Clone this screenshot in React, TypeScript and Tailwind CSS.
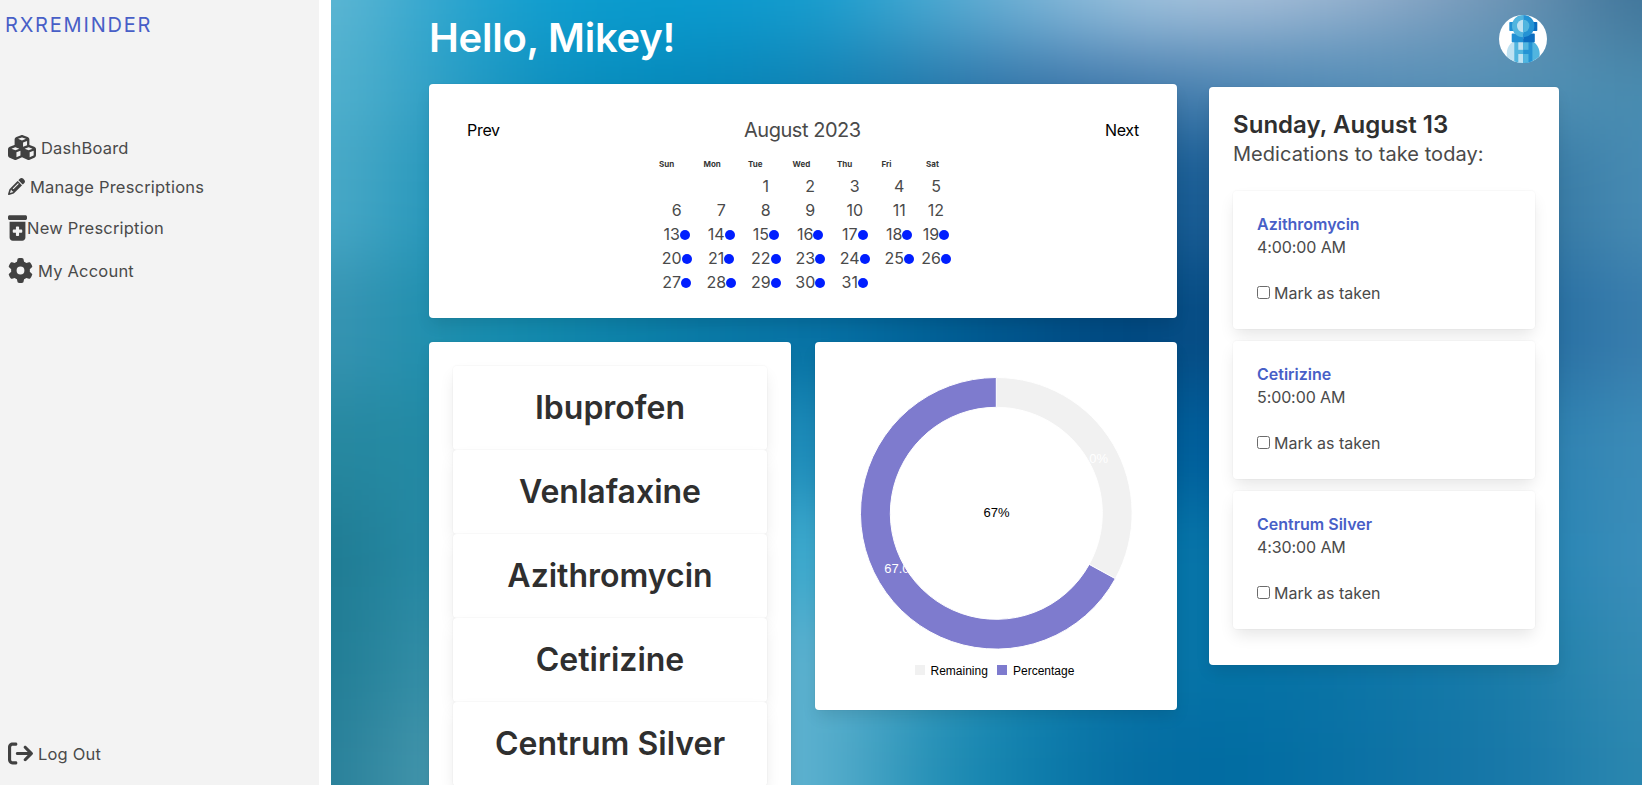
import React from "react";
import {
  FaCubes,
  FaPencil,
  FaPrescriptionBottleMedical,
  FaGear,
  FaArrowRightFromBracket,
} from "react-icons/fa6";

const boxShadow =
  "shadow-[0_0.5em_1em_-0.125em_rgba(10,10,10,0.1),0_0_0_1px_rgba(10,10,10,0.02)]";

/* Colour samples of the wallpaper: one row per height, one colour per 100px column. */
const wallpaper: { y: number; h: number; colors: string }[] = [
  { y: -80, h: 100, colors: "62b8d4 38a8d0 12a0d0 0a9ccf 0a9bd0 1aa0d0 4cacd4 7cb5d7 a0c6e0 b0c6de a2bad4 8aa6c4 6890b0 3c7298" },
  { y: 20, h: 40, colors: "5ab4d0 2ca3ca 1199c9 0895c8 0a92c6 1c93c4 3f96c2 5a9cc8 7ba5ca 7ba2c6 6f9cc2 6593b9 5a90b4 487ea0" },
  { y: 60, h: 70, colors: "54b2ce 34a1c6 1090bf 058bbb 0785b8 1280b2 2577aa 3872a6 4078aa 4a84b2 528cb6 5a92b8 5292b6 488cb0" },
  { y: 130, h: 130, colors: "4caac8 2898bb 1088b5 0a80b0 0a78a8 0a70a0 0a6498 085a90 105890 205f96 2a6a9c 306f9f 32749f 488cb4" },
  { y: 260, h: 130, colors: "3a94b2 1f8fae 128aae 0c80a8 0876a4 0670a4 006096 00528a 00467e 0a5088 145a92 1c6096 226a9e 3a7eae" },
  { y: 390, h: 110, colors: "27889f 2289a4 208cab 1c8cb0 1e8eba 1e8cba 1474a4 08649a 005a92 0060a0 0c6ca2 1a74a8 2a7eae 3c8cb8" },
  { y: 500, h: 110, colors: "1f7a91 268aa6 2a90ae 3096b6 3eaace 3eaace 2490b8 1080b0 0474a8 0874a8 1278aa 1a7cac 2282b2 3c8eba" },
  { y: 610, h: 100, colors: "1f7b93 348fa8 3c98b2 48a4c0 5cb4d2 5cb0ce 3498ba 1484b0 0a76a8 0472a6 0a74a6 1278a8 1c7da8 368cb4" },
  { y: 710, h: 160, colors: "267e98 4496ac 50a0b8 5aaac4 68b8d6 58aecc 2490b6 0e7eac 066ca2 006ca2 0870a4 1274a6 1a79a9 2c88b0" },
];

function Wallpaper() {
  return (
    <svg className="absolute inset-0 h-full w-full" viewBox="0 0 1311 785" preserveAspectRatio="none" aria-hidden="true">
      <defs>
        <filter id="soften" x="-20%" y="-20%" width="140%" height="140%" colorInterpolationFilters="sRGB">
          <feGaussianBlur stdDeviation="50 34" />
        </filter>
      </defs>
      <g filter="url(#soften)">
        {wallpaper.map((row, r) =>
          row.colors.split(" ").map((c, i) => (
            <rect
              key={`${row.y}-${i}`}
              x={i === 0 ? -200 : i * 100 - 50}
              y={r === 0 ? -130 : row.y}
              width={i === 0 ? 251 : i === 13 ? 300 : 101}
              height={r === 0 ? 151 : row.h + 1}
              fill={`#${c}`}
            />
          )),
        )}
      </g>
    </svg>
  );
}

function Avatar() {
  return (
    <svg className="h-12 w-12 rounded-full" viewBox="0 0 48 48" aria-hidden="true">
      <rect width="48" height="48" fill="#fff" />
      <path d="M24 24C13 24 7.7 31 7.7 39c0 4 1.5 7 3.5 9H24z" fill="#bfe2f2" />
      <path d="M24 24c11 0 16.7 7 16.7 15 0 4-1.5 7-3.5 9H24z" fill="#51b5df" />
      <rect x="15.3" y="26" width="8.9" height="22" fill="#51b5df" />
      <rect x="24.2" y="26" width="9.2" height="22" fill="#2493d4" />
      <rect x="19.3" y="26" width="4.9" height="8.8" fill="#bfe2f2" />
      <rect x="24.2" y="26" width="5.3" height="8.8" fill="#51b5df" />
      <rect x="19.3" y="39" width="4.9" height="9" fill="#bfe2f2" />
      <rect x="24.2" y="39" width="5.3" height="9" fill="#51b5df" />
      <rect x="10.3" y="7" width="14" height="9" rx=".8" fill="#2190d4" />
      <rect x="24.2" y="7" width="14.1" height="9" rx=".8" fill="#0b6dc0" />
      <path d="M13.5 18.6H24.2v8.7H13.5a.8.8 0 0 1-.8-.8v-7a.8.8 0 0 1 .8-.9z" fill="#2190d4" />
      <path d="M24.2 18.6H35a.8.8 0 0 1 .8.9v7a.8.8 0 0 1-.8.8H24.2z" fill="#0b6dc0" />
      <path d="M24.2-.2a11.2 11.2 0 0 0 0 22.4z" fill="#51b5df" />
      <path d="M24.2-.2a11.2 11.2 0 0 1 0 22.4z" fill="#2493d4" />
      <path d="M24.2 4.8a6.2 6.2 0 0 0 0 12.4z" fill="#bfe2f2" />
      <path d="M24.2 4.8a6.2 6.2 0 0 1 0 12.4z" fill="#51b5df" />
    </svg>
  );
}

const weekDays = ["Sun", "Mon", "Tue", "Wed", "Thu", "Fri", "Sat"];

function CalendarCard() {
  const cells: (number | null)[] = [null, null, ...Array.from({ length: 31 }, (_, i) => i + 1)];
  return (
    <section className={`h-[234px] rounded bg-white px-[38px] pt-[34px] ${boxShadow}`}>
      <div className="flex h-6 items-center justify-between text-base text-black">
        <button type="button" className="tracking-[-0.3px]">Prev</button>
        <span className="text-[20px] tracking-[-0.45px] text-[#4a4a4a]">August 2023</span>
        <button type="button" className="tracking-[-0.3px]">Next</button>
      </div>
      <div className="mx-auto mt-3.5 grid w-[296px] grid-cols-[repeat(6,44.5px)_29px]">
        {weekDays.map((d) => (
          <div key={d} className="h-[18px] pl-1 text-[8px] leading-[16px] font-bold text-[#363636]">{d}</div>
        ))}
        {cells.map((n, i) => (
          <div key={i} className="flex h-6 items-center justify-center leading-6">
            <span className="-ml-px">{n}</span>
            {n !== null && n >= 13 && <span className="mt-0.5 h-2.5 w-2.5 shrink-0 rounded-full bg-[#001eff]" />}
          </div>
        ))}
      </div>
    </section>
  );
}

function DonutCard() {
  return (
    <section className={`h-[368px] rounded bg-white ${boxShadow}`}>
      <svg className="h-[368px] w-[362px]" viewBox="815 342 362 368" fontFamily="Liberation Sans, Arial, sans-serif">
        <path d="M996.3 377.5A135.8 135.8 0 0 1 1115.3 578.7L1089.2 564.4A106 106 0 0 0 996.3 407.3Z" fill="#f1f1f1" stroke="#fff" />
        <path d="M1115.3 578.7A135.8 135.8 0 1 1 996.3 377.5V407.3A106 106 0 1 0 1089.2 564.4Z" fill="#7e7bce" stroke="#fff" />
        <text x="996.5" y="517" fontSize="13" textAnchor="middle" fill="#000">67%</text>
        <text x="1108" y="463.3" fontSize="13" textAnchor="end" fill="#fff">33.0%</text>
        <text x="884.3" y="573.3" fontSize="13" fill="#fff">67.0%</text>
        <rect x="915" y="665" width="10" height="10" fill="#f1f1f1" />
        <text x="930.5" y="675" fontSize="12" fill="#000">Remaining</text>
        <rect x="997" y="665" width="10" height="10" fill="#7e7bce" />
        <text x="1013" y="675" fontSize="12" fill="#000">Percentage</text>
      </svg>
    </section>
  );
}

const medications = ["Ibuprofen", "Venlafaxine", "Azithromycin", "Cetirizine", "Centrum Silver"];

function MedicationList() {
  return (
    <section className={`h-[480px] rounded bg-white p-6 ${boxShadow}`}>
      {medications.map((m) => (
        <div
          key={m}
          className="flex h-[84px] items-center justify-center rounded bg-white shadow-[0_8px_16px_-2px_rgba(10,10,10,0.1),0_0_0_1px_rgba(10,10,10,0.02)]"
        >
          <h3 className="text-[32px] leading-9 font-semibold text-[#2f2f2f]">{m}</h3>
        </div>
      ))}
    </section>
  );
}

const doses = [
  { name: "Azithromycin", time: "4:00:00 AM" },
  { name: "Cetirizine", time: "5:00:00 AM" },
  { name: "Centrum Silver", time: "4:30:00 AM" },
];

function TodayCard() {
  return (
    <section className={`mt-6 h-[578px] rounded bg-white p-6 ${boxShadow}`}>
      <h2 className="text-2xl leading-[27px] font-semibold tracking-[0.04px] text-[#2f2f2f]">Sunday, August 13</h2>
      <p className="mt-px text-[20px] leading-[30px] tracking-[0.05px]">Medications to take today:</p>
      <div className="mt-[22px] flex flex-col gap-3">
        {doses.map((d) => (
          <div key={d.name} className={`h-[138px] rounded bg-white p-6 ${boxShadow}`}>
            <div className="leading-[18px] font-semibold text-[#485fc7]">{d.name}</div>
            <div className="mt-0.5 leading-6 tracking-[-0.1px]">{d.time}</div>
            <label className="mt-[22px] flex items-center leading-6">
              <input type="checkbox" className="mr-1 mb-0.5 h-[13px] w-[13px] appearance-none rounded-[2.5px] border border-[#6b6b6b] bg-white" />
              Mark as taken
            </label>
          </div>
        ))}
      </div>
    </section>
  );
}

function Sidebar() {
  return (
    <aside className="flex h-full w-[319px] flex-col bg-[#f3f3f3]">
      <div className="mt-[10px] ml-[5px] text-[20px] leading-[30px] tracking-[1.8px] text-[#485fc7]">RXREMINDER</div>
      <nav className="mt-[96px] ml-2 flex flex-col text-[16.5px] tracking-[0.2px]">
        <a className="flex h-6 items-center"><FaCubes className="mr-[5px] mb-0.5 h-[25px] w-7 text-[#414141]" />DashBoard</a>
        <a className="mt-[15px] flex h-6 items-center"><FaPencil className="mr-[5px] mb-px h-[17px] w-[17px] text-[#414141]" />Manage Prescriptions</a>
        <a className="mt-[17px] flex h-6 items-center"><FaPrescriptionBottleMedical className="h-[26px] w-[19px] text-[#414141]" />New Prescription</a>
        <a className="mt-[19px] flex h-6 items-center"><FaGear className="mr-[5px] mb-px h-[25px] w-[25px] text-[#414141]" />My Account</a>
      </nav>
      <a className="mt-auto mb-[19px] ml-2 flex h-6 items-center text-[16.5px] tracking-[0.2px]">
        <FaArrowRightFromBracket className="mr-[5px] mb-0.5 h-[25px] w-[25px] text-[#414141]" />Log Out
      </a>
    </aside>
  );
}

export default function App() {
  return (
    <div className="flex h-[785px] w-full gap-3 overflow-hidden bg-white font-[Inter,sans-serif] text-base text-[#4a4a4a]">
      <Sidebar />
      <main className="relative h-full flex-1 overflow-hidden">
        <Wallpaper />
        <div className="relative flex pl-[98px]">
          <div className="w-[748px]">
            <h1 className="flex h-[84px] items-center pb-2 text-[40px] font-semibold tracking-[-0.25px] text-white">Hello, Mikey!</h1>
            <CalendarCard />
            <div className="mt-6 grid grid-cols-2 items-start gap-6">
              <MedicationList />
              <DonutCard />
            </div>
          </div>
          <div className="ml-8 w-[350px]">
            <div className="flex justify-end pt-[15px] pr-3">
              <Avatar />
            </div>
            <TodayCard />
          </div>
        </div>
      </main>
    </div>
  );
}
